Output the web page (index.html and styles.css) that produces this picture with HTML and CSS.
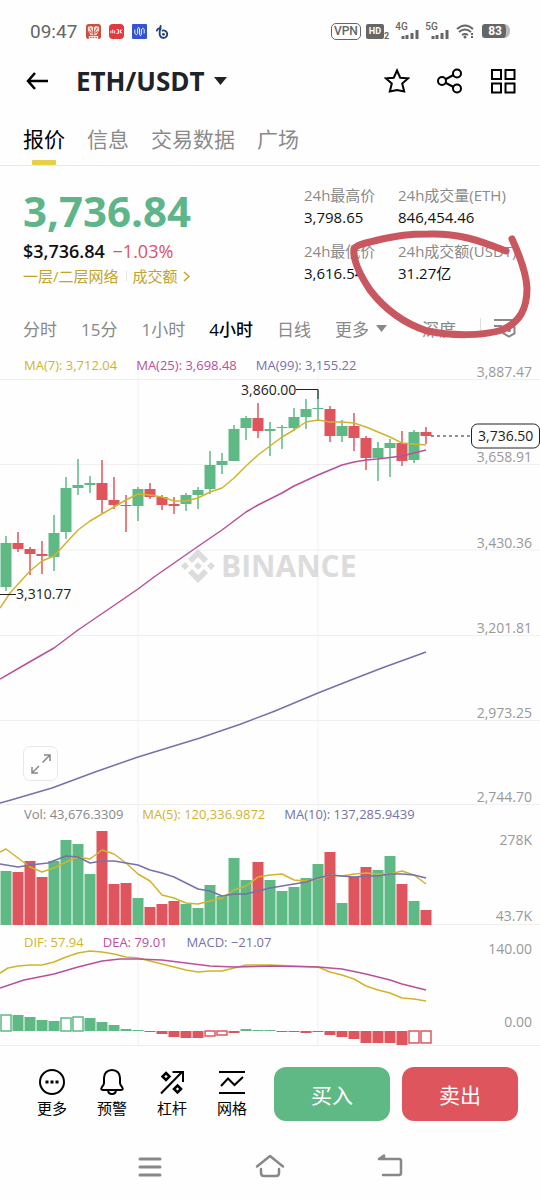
FILE: index.html
```html
<!DOCTYPE html>
<html lang="zh-CN">
<head>
  <meta charset="UTF-8">
  <meta name="viewport" content="width=device-width, initial-scale=1.0">
  <title>ETH/USDT</title>
  <link rel="stylesheet" href="styles.css">
</head>
<body>

  <div class="status-bar">
    <span class="clock">09:47</span>
    <svg class="app-icon" viewBox="0 0 16 16">
      <rect width="16" height="16" rx="3" fill="#c9503f"/>
      <path d="M2 3l4-1 2 2 2-2 4 1v4l-3 5H5L2 7z" fill="#f7d9cf"/>
      <path d="M8 4v8M4 4l3 5M12 4L9 9M3 8l4 2M13 8l-4 2" stroke="#c9503f" stroke-width="1"/>
      <rect x="3" y="13" width="10" height="3" fill="#fff"/>
      <path d="M4 14.500h8" stroke="#c9503f" stroke-width="1" stroke-dasharray="2 1"/>
    </svg>
    <svg class="app-icon" viewBox="0 0 16 16">
      <rect width="16" height="16" rx="4" fill="#e0393f"/>
      <path d="M2 7v3M4 6v4M6 7v3M8 6h2v4H8M12 6v4M12 8l2-2M12 8l2 2" stroke="#fff" fill="none"/>
    </svg>
    <svg class="app-icon" viewBox="0 0 16 16">
      <rect width="16" height="16" rx="1" fill="#3355d4"/>
      <path d="M3 6v4q2 3 3 0V5q1-3 2 0v6q1 3 2 0V6q2-3 3 0v4" stroke="#fff" fill="none"/>
    </svg>
    <svg class="app-icon" viewBox="0 0 16 16">
      <path d="M6 2L5 8v3a4 4 0 1 0 3-4M2 7q1-3 4-2" stroke="#24407c" stroke-width="2" fill="none" stroke-linecap="round"/>
      <circle cx="9" cy="11" r="1.500" fill="#24407c"/>
    </svg>
    <span class="vpn">VPN</span>
    <span class="hd">HD</span><span class="hd-sub">2</span>
    <span class="signal">
      <span class="net">4G</span>
      <svg width="18" height="9" viewBox="0 0 18 9"><path d="M2 9V6M6 9V5M11 9V3M16 9V0" stroke="#666" stroke-width="3"/></svg>
    </span>
    <span class="signal">
      <span class="net">5G</span>
      <svg width="18" height="9" viewBox="0 0 18 9"><path d="M2 9V6M6 9V5M11 9V3M16 9V0" stroke="#666" stroke-width="3"/></svg>
    </span>
    <svg class="wifi" width="19" height="15" viewBox="0 0 19 15">
      <path d="M1 5q8-7 16 0M3 8q6-5 12 0M6 11q3-2 6 0" fill="none" stroke="#666" stroke-width="2"/>
      <circle cx="9" cy="13" r="1.500" fill="#666"/>
      <path d="M16 9v2M16 12v2" stroke="#666" stroke-width="2"/>
    </svg>
    <span class="battery">83</span>
  </div>

  <header class="header">
    <button class="icon-btn" aria-label="返回">
      <svg width="24" height="24" viewBox="0 0 24 24" fill="none" stroke="#000" stroke-width="2.500"><path d="M10 4L3 12l7 8M3 12h20"/></svg>
    </button>
    <button class="pair">ETH/USDT
      <svg width="13" height="8" viewBox="0 0 13 8"><path d="M0 0h13L6.500 8z" fill="#1e2329"/></svg>
    </button>
    <div class="actions">
      <button class="icon-btn" aria-label="收藏">
        <svg width="26" height="26" viewBox="0 0 26 26" fill="none" stroke="#000" stroke-width="2"><path d="M13 2.500l3.200 7.200 8 .6-6 5.200 2 8-7.200-1.500-7.200 1.500 2-8-6-5.200 8-.6z"/></svg>
      </button>
      <button class="icon-btn" aria-label="分享">
        <svg width="26" height="26" viewBox="0 0 26 26" fill="none" stroke="#000" stroke-width="2"><circle cx="5" cy="13" r="4"/><circle cx="20" cy="5.500" r="4"/><circle cx="20" cy="20.500" r="4"/><path d="M9 11l7.500-4M9 15l7.500 4"/></svg>
      </button>
      <button class="icon-btn" aria-label="更多功能">
        <svg width="26" height="26" viewBox="0 0 26 26" fill="none" stroke="#000" stroke-width="2"><rect x="2" y="2" width="9" height="9"/><rect x="15.500" y="2" width="9" height="9"/><rect x="2" y="15.500" width="9" height="9"/><rect x="15.500" y="15.500" width="9" height="9"/></svg>
      </button>
    </div>
  </header>

  <nav class="tabs">
    <button class="tab active">报价</button>
    <button class="tab">信息</button>
    <button class="tab">交易数据</button>
    <button class="tab">广场</button>
  </nav>

  <main>
    <section class="ticker">
      <div class="price-box">
        <div class="price">3,736.84</div>
        <div class="fiat">$3,736.84 <span class="change">−1.03%</span></div>
        <div class="tags">
          <a class="tag" href="#">一层/二层网络</a>
          <a class="tag tag-more" href="#">成交额
            <svg width="7" height="11" viewBox="0 0 7 11"><path d="M1 1l5 4.500-5 4.500" fill="none" stroke="#c0a32c" stroke-width="1.500"/></svg>
          </a>
        </div>
      </div>
      <dl class="stats">
        <div><dt>24h最高价</dt><dd>3,798.65</dd></div>
        <div><dt>24h成交量(ETH)</dt><dd>846,454.46</dd></div>
        <div><dt>24h最低价</dt><dd>3,616.54</dd></div>
        <div><dt>24h成交额(USDT)</dt><dd>31.27亿</dd></div>
      </dl>
      <!-- hand drawn mark round the turnover -->
      <svg class="marker" width="184" height="112" viewBox="350 228 184 112">
        <path d="M512 239C517 250 526 269 527 288C527 309 520 322 502 330C482 336 452 336 427 331C400 322 383 307 370 290C358 272 353 258 354 249Q355 245 374 241C398 235 411 234 428 234C458 233 478 240 506 251" fill="none" stroke="#c9575f" stroke-width="7" stroke-linecap="round" stroke-linejoin="round"/>
      </svg>
    </section>

    <div class="intervals">
      <button class="interval">分时</button>
      <button class="interval">15分</button>
      <button class="interval">1小时</button>
      <button class="interval active">4小时</button>
      <button class="interval">日线</button>
      <button class="interval">更多
        <svg width="11" height="7" viewBox="0 0 11 7"><path d="M0 0h11L5.500 7z" fill="#888"/></svg>
      </button>
      <button class="interval depth">深度</button>
      <button class="interval settings" aria-label="图表设置">
        <svg width="22" height="20" viewBox="0 0 22 20" fill="none" stroke="#888" stroke-width="2"><path d="M0 2h20M0 8h8"/><path d="M15 6l5.500 3.200v6.200L15 18.500l-5.500-3.100V9.200z"/><circle cx="15" cy="12.300" r="1"/></svg>
      </button>
    </div>

    <section class="charts">
      <div class="panel">
        <div class="legend">
          <span class="yellow">MA(7): 3,712.04</span>
          <span class="pink">MA(25): 3,698.48</span>
          <span class="indigo">MA(99): 3,155.22</span>
        </div>
        <svg class="chart" id="priceChart" viewBox="0 350 540 455"></svg>
        <button class="expand" aria-label="全屏">
          <svg width="22" height="22" viewBox="0 0 22 22" fill="none" stroke="#888" stroke-width="1.500"><path d="M12.500 9.500L20 2M14 2h6v6M9 13l-7 7M2 14v6h6"/></svg>
        </button>
      </div>
      <div class="panel">
        <div class="legend">
          <span class="grey">Vol: 43,676.3309</span>
          <span class="yellow">MA(5): 120,336.9872</span>
          <span class="indigo">MA(10): 137,285.9439</span>
        </div>
        <svg class="chart" id="volChart" viewBox="0 805 540 120"></svg>
      </div>
      <div class="panel">
        <div class="legend legend-macd">
          <span class="yellow">DIF: 57.94</span>
          <span class="pink">DEA: 79.01</span>
          <span class="indigo">MACD: −21.07</span>
        </div>
        <svg class="chart" id="macdChart" viewBox="0 925 540 120"></svg>
      </div>
    </section>
  </main>

  <footer class="bottom-bar">
    <div class="tools">
      <button class="tool">
        <svg width="28" height="28" viewBox="0 0 28 28" fill="none" stroke="#000" stroke-width="2"><circle cx="14" cy="15" r="12"/><path d="M7.500 15h3M12.500 15h3M17.500 15h3" stroke-width="3"/></svg>
        更多
      </button>
      <button class="tool">
        <svg width="28" height="28" viewBox="0 0 28 28" fill="none" stroke="#000" stroke-width="2"><path d="M14 3C9 3 6 6.500 6 11v5q0 2-2 4-2 3 1 3h18q3 0 1-3-2-2-2-4v-5c0-4.500-3-8-8-8z"/><path d="M10 23q0 4 4 4t4-4"/></svg>
        预警
      </button>
      <button class="tool">
        <svg width="28" height="28" viewBox="0 0 28 28" fill="none" stroke="#000" stroke-width="2"><path d="M3 26.500L24 5M14.500 5H25V15"/><path d="M8 6l3.500 3.500L8 13 4.500 9.500zM19.500 18.500L23 22l-3.500 3.500L16 22z" stroke-width="2.500"/></svg>
        杠杆
      </button>
      <button class="tool">
        <svg width="28" height="28" viewBox="0 0 28 28" fill="none" stroke="#000" stroke-width="2"><path d="M1 5h26M1 26h26M3 19l7-7.500 6.500 6.500L25 10"/></svg>
        网格
      </button>
    </div>
    <button class="trade buy">买入</button>
    <button class="trade sell">卖出</button>
  </footer>

  <div class="system-nav">
    <svg width="30" height="26" viewBox="0 0 30 26" fill="none" stroke="#888" stroke-width="3" stroke-linecap="round"><path d="M5 5h20M5 13h20M5 21h20"/></svg>
    <svg width="30" height="26" viewBox="0 0 30 26" fill="none" stroke="#888" stroke-width="2.500" stroke-linecap="round" stroke-linejoin="round"><path d="M2 12.500L15 2l13 10.500M6 15v4q0 3 3 3h12q3 0 3-3v-4"/></svg>
    <svg width="30" height="26" viewBox="0 0 30 26" fill="none" stroke="#888" stroke-width="2.500" stroke-linecap="round" stroke-linejoin="round"><path d="M9 1.500L4 5h20q2 0 2 2v12q0 2-2 2H8M9 2v3"/></svg>
  </div>

  <script src="chart.js"></script>
</body>
</html>
```

FILE: styles.css
```css
* {
  box-sizing: border-box;
}

body {
  margin: 0;
  background-color: #fefefe;
  color: #111;
  font-family: "Open Sans", "Noto Sans CJK SC", sans-serif;
}

button {
  padding: 0;
  border: none;
  background: none;
  color: inherit;
  font-family: inherit;
  cursor: pointer;
}

svg {
  display: block;
}

/* status bar */
.status-bar {
  display: flex;
  align-items: center;
  height: 50px;
  padding: 12px 30px 0;
  color: #666;
  font-family: Roboto, sans-serif;
}

.clock {
  margin-right: 9px;
  font-size: 19px;
}

.app-icon {
  width: 15px;
  height: 15px;
  margin-right: 8px;
}

.vpn {
  margin-left: auto;
  padding: 0 2px;
  border: 1px solid #666;
  border-radius: 5px;
  font-size: 12px;
  font-weight: 500;
  line-height: 15px;
}

.hd {
  margin-left: 5px;
  padding: 0 3px;
  border-radius: 2px;
  background: #666;
  color: #fff;
  font-size: 9px;
  font-weight: 700;
  line-height: 15px;
}

.hd-sub {
  align-self: flex-end;
  padding-bottom: 9px;
  font-size: 9px;
  font-weight: 700;
}

.signal {
  display: flex;
  flex-direction: column;
  align-items: flex-end;
  width: 24px;
  margin-left: 6px;
}

.net {
  align-self: flex-start;
  height: 7px;
  font-size: 10px;
  font-weight: 500;
  line-height: 7px;
}

.wifi {
  margin-left: 7px;
}

.battery {
  margin-left: 7px;
  padding: 0 4px 0 6px;
  border-right: 4px solid #bbb;
  border-radius: 3px 6px 6px 3px;
  background: #666;
  color: #fff;
  font-size: 12px;
  font-weight: 700;
  line-height: 14px;
}

/* header */
.header {
  display: flex;
  align-items: center;
  height: 62px;
  padding: 0 24px 0 25px;
}

.pair {
  display: flex;
  align-items: center;
  gap: 9px;
  margin-left: 27px;
  color: #1e2329;
  font-size: 26px;
  font-weight: 700;
  line-height: 34px;
}

.actions {
  display: flex;
  gap: 27px;
  margin-left: auto;
}

.tabs {
  display: flex;
  gap: 22px;
  height: 54px;
  padding: 0 23px;
  border-bottom: 1px solid #eaeaea;
}

.tab {
  position: relative;
  color: #8a8a8a;
  font-size: 21px;
  line-height: 48px;
}

.tab.active {
  color: #000;
}

.tab.active::after {
  content: "";
  position: absolute;
  bottom: 0;
  left: 50%;
  width: 24px;
  height: 5px;
  margin-left: -12px;
  border-radius: 1px;
  background: #e8cf4b;
}

/* ticker */
.ticker {
  position: relative;
  display: flex;
  justify-content: space-between;
  height: 142px;
  padding: 17px 16px 0 23px;
}

.price {
  color: #5fb58a;
  font-size: 42px;
  font-weight: 700;
  line-height: 56px;
}

.fiat {
  font-size: 18px;
  font-weight: 600;
  line-height: 24px;
}

.change {
  margin-left: 3px;
  color: #d9536a;
  font-weight: 400;
}

.tags {
  display: flex;
  align-items: center;
  gap: 7px;
  font-size: 15px;
  line-height: 26px;
}

.tag {
  color: #c0a32c;
  text-decoration: none;
}

.tag-more {
  display: flex;
  align-items: center;
  gap: 5px;
  padding-left: 7px;
  background: linear-gradient(#e6e6e6, #e6e6e6) left center / 1px 10px no-repeat;
}

.stats {
  display: grid;
  grid-template-columns: 94px 122px;
  grid-auto-rows: 56px;
  width: 220px;
  margin: 0;
  font-size: 15px;
  line-height: 22px;
  white-space: nowrap;
}

.stats dt {
  padding-top: 1px;
  color: #8a8a8a;
}

.stats dd {
  margin: 0;
}

.marker {
  position: absolute;
  top: 62px;
  right: 6px;
  z-index: 2;
}

/* interval row */
.intervals {
  display: flex;
  align-items: center;
  gap: 24px;
  height: 42px;
  padding: 0 24px 2px 23px;
}

.interval {
  display: flex;
  align-items: center;
  gap: 7px;
  color: #888;
  font-size: 17px;
}

.interval.active {
  color: #000;
  font-weight: 500;
}

.depth {
  margin-left: auto;
}

.settings {
  padding-left: 13px;
  border-left: 1px solid #ddd;
}

/* charts */
.charts {
  border-bottom: 1px solid #eee;
}

.panel {
  position: relative;
}

.chart {
  width: 100%;
  height: auto;
}

.legend {
  position: absolute;
  top: 6px;
  left: 24px;
  display: flex;
  gap: 19px;
  font-size: 13px;
  line-height: 18px;
}

.panel + .panel .legend {
  top: 0;
}

.panel + .panel .legend-macd {
  top: 8px;
}

.yellow { color: #d0b52c; }
.pink { color: #b8509b; }
.indigo { color: #7671a8; }
.grey { color: #888; }

.grid-line {
  stroke: #f0f0f0;
  stroke-width: 1;
}

.line {
  fill: none;
  stroke: currentColor;
  stroke-width: 1.5;
  stroke-linejoin: round;
}

.axis {
  fill: #999;
  font-size: 14px;
  text-anchor: end;
}

.mark {
  fill: #222;
  font-size: 14px;
}

.mark-line {
  fill: none;
  stroke: #222;
}

.price-tag {
  fill: #fff;
  stroke: #222;
}

.brand {
  fill: #dcdcdc;
  font-size: 30px;
  font-weight: 700;
}

.expand {
  position: absolute;
  bottom: 24px;
  left: 23px;
  display: flex;
  align-items: center;
  justify-content: center;
  width: 35px;
  height: 35px;
  border: 1px solid #e8e8e8;
  border-radius: 7px;
  background: #fff;
}

/* bottom */
.bottom-bar {
  display: flex;
  gap: 12px;
  padding: 21px 22px 0;
}

.tools {
  display: flex;
  width: 240px;
}

.tool {
  display: flex;
  flex: 1;
  flex-direction: column;
  align-items: center;
  color: #000;
  font-size: 15px;
  line-height: 26px;
}

.trade {
  flex: 1;
  height: 54px;
  border-radius: 12px;
  color: #fff;
  font-size: 21px;
}

.buy { background: #5fb985; }
.sell { background: #df555d; }

.system-nav {
  display: flex;
  justify-content: center;
  gap: 90px;
  padding: 33px 0 18px;
}
```

FILE: chart.js
```js
const GREEN = "#5fb985";
const RED = "#df555d";
const STEP = 12;

// high, low, body top, body bottom, direction
const candles = [
  [536, 591, 543, 587, 1], [532, 552, 543, 549, 0], [547, 575, 549, 554, 0],
  [541, 574, 554, 556, 0], [515, 571, 533, 557, 1], [477, 539, 488, 532, 1],
  [459, 495, 485, 488, 1], [476, 493, 483, 485, 1], [460, 513, 483, 500, 0],
  [477, 509, 500, 505, 0], [495, 532, 505, 506, 0], [487, 521, 489, 506, 1],
  [483, 499, 489, 497, 0], [495, 510, 497, 505, 0], [497, 514, 504, 506, 0],
  [493, 511, 495, 504, 1], [487, 509, 490, 495, 1], [451, 494, 465, 489, 1],
  [453, 474, 461, 465, 1], [425, 461, 429, 461, 1], [416, 440, 418, 428, 1],
  [403, 438, 418, 431, 0], [422, 456, 429, 431, 1], [425, 449, 427, 428, 1],
  [408, 431, 417, 428, 1], [399, 429, 409, 417, 1], [390, 421, 408, 409, 1],
  [406, 442, 409, 436, 0], [420, 442, 426, 436, 1], [413, 451, 426, 438, 0],
  [436, 470, 438, 458, 0], [442, 481, 448, 458, 1], [439, 477, 443, 448, 1],
  [431, 466, 443, 461, 0], [430, 463, 432, 460, 1], [427, 444, 432, 436, 0]
];

const volumes = [
  871, 872, 861, 877, 861, 840, 844, 874, 831, 884, 883, 898,
  907, 904, 901, 904, 908, 885, 896, 858, 880, 862, 880, 891,
  887, 878, 864, 852, 903, 877, 867, 870, 856, 884, 901, 910
];

const macd = [
  1015, 1015, 1017, 1020, 1021, 1018, 1017, 1018, 1022, 1025, 1029, 1030,
  1032, 1034, 1037, 1038, 1038, 1036, 1035, 1033, 1029, 1030, 1030, 1032,
  1032, 1033, 1032, 1035, 1037, 1039, 1043, 1043, 1043, 1045, 1043, 1043
];
const hollow = [0, 5, 6, 17, 18, 34, 35];

const ma7 = "0,608 10,593 30,571 42,561 54,556 66,543 78,530 90,521 102,514 114,507 126,500 138,494 150,495 162,497 174,501 186,501 198,498 210,492 222,488 234,478 246,466 258,455 270,446 282,437 294,430 306,422 318,420 330,422 342,422 354,423 366,427 378,432 390,437 402,443 414,444 426,445";
const ma25 = "0,679 26,664 54,648 78,630 122,600 138,589 154,577 200,545 222,530 246,512 258,505 282,493 294,486 318,475 342,465 354,462 366,460 378,459 402,456 426,450";
const ma99 = "0,803 11,800 52,788 95,772 138,757 200,738 241,724 275,711 318,693 351,680 382,668 426,652";
const vol5 = "0,852 6,849 18,858 30,867 42,872 54,868 66,862 78,857 90,859 102,850 114,854 126,863 138,874 150,881 162,895 174,898 186,903 198,904 210,901 222,898 234,890 246,886 258,877 270,875 282,874 294,880 306,881 318,879 330,875 342,876 354,874 366,873 378,874 390,874 402,871 414,875 426,884";
const vol10 = "0,864 18,867 30,865 48,863 66,856 78,857 90,863 102,861 114,861 126,863 138,865 150,870 162,873 174,877 186,883 198,889 210,891 222,896 234,894 246,894 258,891 270,888 282,886 294,884 306,882 318,878 330,875 342,876 354,877 366,876 378,876 390,874 402,874 414,875 426,878";
const dif = "0,973 8,968 18,966 30,965 42,965 54,962 66,957 78,953 90,951 102,952 114,954 126,957 138,958 150,961 162,964 174,967 186,970 198,972 210,971 222,971 234,968 246,965 270,965 294,966 318,967 330,972 342,975 354,979 366,986 378,990 390,993 402,998 414,999 426,1001";
const dea = "0,988 24,980 54,974 78,967 102,961 120,959 138,959 162,960 186,963 210,966 234,967 270,966 318,967 342,969 366,974 390,980 402,984 426,990";

function hLine(y) {
  return `<path class="grid-line" d="M0 ${y}H540"/>`;
}

function vLines(top, bottom) {
  return `<path class="grid-line" d="M138 ${top}V${bottom}M318 ${top}V${bottom}"/>`;
}

function line(points, color) {
  return `<polyline class="line ${color}" points="${points}"/>`;
}

function axis(y, text) {
  return `<text class="axis" x="532" y="${y}">${text}</text>`;
}

function rect(i, top, bottom, color, width) {
  const x = 6 + i * STEP - width / 2;
  return `<rect x="${x}" y="${top}" width="${width}" height="${Math.max(bottom - top, 1)}" fill="${color}"/>`;
}

function drawPrice() {
  let out = vLines(365, 805);
  [379.5, 464.5, 550, 635.5, 720.5, 804.5].forEach(y => out += hLine(y));

  // watermark
  out += `<g fill="#dcdcdc" transform="translate(198 566)">
    <path d="M0-17L10-7l-4 4-6-6-6 6-4-4zM0 17L10 7 6 3 0 9-6 3l-4 4zM0-4l4 4-4 4-4-4zM-13-4l4 4-4 4-4-4zM13-4l4 4-4 4-4-4z"/>
  </g><text class="brand" x="221" y="577">BINANCE</text>`;

  candles.forEach(([high, low, top, bottom, up], i) => {
    const color = up ? GREEN : RED;
    out += rect(i, high, low, color, 1.5) + rect(i, top, bottom, color, 11);
  });
  out += line(ma99, "indigo") + line(ma25, "pink") + line(ma7, "yellow");

  out += `<path class="mark-line" d="M296 389.500H318V399M0 594.500H16"/>
    <text class="mark" x="241" y="395">3,860.00</text>
    <text class="mark" x="16" y="599">3,310.77</text>`;

  out += axis(377, "3,887.47") + axis(462, "3,658.91") + axis(548, "3,430.36")
    + axis(633, "3,201.81") + axis(718, "2,973.25") + axis(802, "2,744.70");

  // current price
  out += `<path class="mark-line" d="M431 436H471" stroke-dasharray="3 3"/>
    <rect class="price-tag" x="471.500" y="424" width="68" height="24" rx="6"/>
    <text class="mark" x="478" y="441">3,736.50</text>`;
  document.getElementById("priceChart").innerHTML = out;
}

function drawVolume() {
  let out = vLines(805, 925) + hLine(924.5);
  volumes.forEach((top, i) => {
    out += rect(i, top, 925, candles[i][4] ? GREEN : RED, 11);
  });
  out += line(vol5, "yellow") + line(vol10, "indigo");
  out += axis(845, "278K") + axis(921, "43.7K");
  document.getElementById("volChart").innerHTML = out;
}

function drawMacd() {
  let out = vLines(925, 1045);
  macd.forEach((y, i) => {
    const color = y < 1031 ? GREEN : RED;
    const top = Math.min(y, 1031);
    const bottom = Math.max(y, 1031);
    if (hollow.includes(i)) {
      out += `<rect x="${1 + i * STEP}" y="${top}" width="10" height="${bottom - top}" fill="#fff" stroke="${color}" stroke-width="1.500"/>`;
    } else {
      out += rect(i, top, bottom, color, 11);
    }
  });
  out += line(dif, "yellow") + line(dea, "pink");
  out += axis(954, "140.00") + axis(1027, "0.00");
  document.getElementById("macdChart").innerHTML = out;
}

drawPrice();
drawVolume();
drawMacd();
```
